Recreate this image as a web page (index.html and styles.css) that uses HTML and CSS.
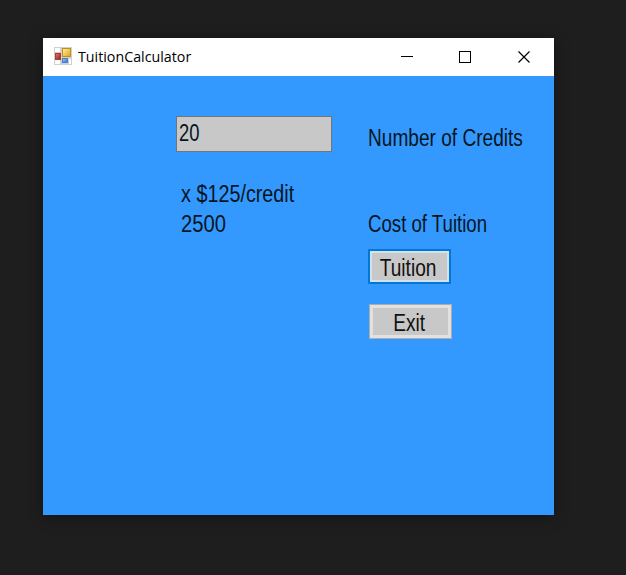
FILE: index.html
```html
<!DOCTYPE html>
<html lang="en">
<head>
<meta charset="utf-8">
<title>TuitionCalculator</title>
<link rel="stylesheet" href="styles.css">
</head>
<body>
<main class="window">
  <header class="titlebar">
    <svg class="app-icon" width="18" height="18" viewBox="0 0 18 18">
      <defs>
        <linearGradient id="gold" x2="1" y2="1"><stop stop-color="#fff2a8"/><stop offset="1" stop-color="#e0a00c"/></linearGradient>
        <linearGradient id="red" x2="1" y2="1"><stop stop-color="#e07a6a"/><stop offset="1" stop-color="#a01c14"/></linearGradient>
        <linearGradient id="blue" x2="1" y2="1"><stop stop-color="#a0c8ff"/><stop offset="1" stop-color="#3068c8"/></linearGradient>
      </defs>
      <rect width="18" height="18" fill="#d0d0d4"/>
      <path d="M1 1h5v4H1zM1 13h5v4H1zM15 12h2v5h-2z" fill="#fff"/>
      <rect x="1.5" y="6.5" width="5" height="6" fill="url(#red)" stroke="#a83c34"/>
      <rect x="8.5" y="1.5" width="8" height="8" fill="url(#gold)" stroke="#c09020"/>
      <rect x="8.5" y="11.5" width="5" height="4" fill="url(#blue)" stroke="#5080c8"/>
    </svg>
    <h1 class="title">TuitionCalculator</h1>
    <svg class="controls" width="130" height="12" viewBox="0 0 130 12">
      <path d="M0 5.5h12M58.5.5h11v11h-11z"/>
      <path class="close" d="M117.5.5l11 11M128.5.5l-11 11"/>
    </svg>
  </header>
  <section class="form">
    <div class="values">
      <div class="field"><span class="text t-20">20</span></div>
      <div class="line"><span class="text t-rate">x $125/credit</span></div>
      <div class="line"><span class="text t-total">2500</span></div>
    </div>
    <div class="actions">
      <div class="line"><span class="text t-number">Number of Credits</span></div>
      <div class="line cost"><span class="text t-cost">Cost of Tuition</span></div>
      <button class="button primary"><span class="text">Tuition</span></button>
      <button class="button exit"><span class="text">Exit</span></button>
    </div>
  </section>
</main>
</body>
</html>
```
FILE: styles.css
```css
* { box-sizing: border-box; }
body {
  margin: 0;
  height: 575px;
  padding: 38px 0 0 43px;
  background: #1e1e1e;
  overflow: hidden;
  font-family: "Liberation Sans", Arial, sans-serif;
}
.window {
  width: 511px;
  height: 477px;
  background: #3399ff;
  box-shadow: 0 2px 14px rgba(0, 0, 0, .4);
}
.titlebar {
  display: flex;
  align-items: center;
  height: 38px;
  padding: 0 23px 0 11px;
  background: #fff;
}
.app-icon { margin-bottom: 2px; }
.title {
  margin: 0 auto 2px 6px;
  font: 400 15px/20px "Open Sans", "Noto Sans", sans-serif;
  color: #000;
  transform: scaleX(.95);
  transform-origin: left;
}
.controls { fill: none; stroke: #000; stroke-width: 1; shape-rendering: crispEdges; }
.close { shape-rendering: auto; stroke-width: 1.2; }
.form { display: flex; padding: 40px 0 0 133px; }
.values { flex: none; width: 192px; }
.field {
  width: 156px;
  height: 36px;
  margin-bottom: 27px;
  padding: 1px 0 0 2px;
  border: 1px solid #6f777c;
  background: #c8c8c8;
}
.line { height: 30px; white-space: nowrap; }
.values .line { padding-left: 5px; }
.text {
  display: inline-block;
  font-size: 23px;
  line-height: 30px;
  color: #071522;
  white-space: nowrap;
  transform: scaleX(.83);
  transform-origin: left;
}
.t-20 { transform: scaleX(.8); }
.t-rate { transform: scaleX(.86); }
.t-total { transform: scaleX(.88); }
.t-cost { transform: scaleX(.81); }
.actions { flex: none; padding-top: 7px; }
.cost { margin: 56px 0 10px; }
.button {
  display: flex;
  justify-content: center;
  align-items: center;
  width: 83px;
  height: 35px;
  padding: 2px 0 0;
  font-family: inherit;
  background: #c8c8c8;
}
.button .text { color: #111; transform-origin: center; }
.primary { padding-right: 3px; border: 2px solid #0078d7; box-shadow: inset 0 0 0 2px #d5e2ec; }
.exit {
  margin: 20px 0 0 1px;
  padding-right: 2px;
  border: 1px solid #adadad;
  box-shadow: inset 0 0 0 3px #e1e1e1;
}
```
